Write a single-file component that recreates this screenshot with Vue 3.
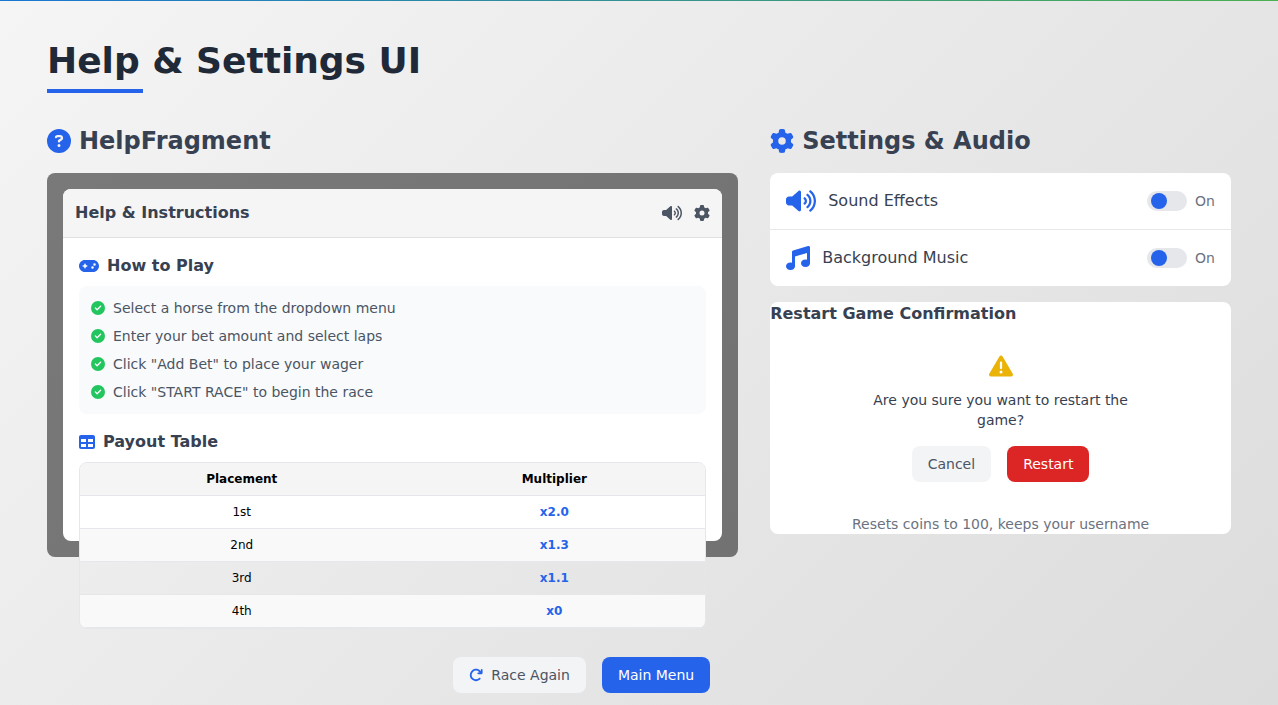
<script setup>
import { h, ref } from 'vue'

const glyphs = {
  question: [512, 'M256 512A256 256 0 1 0 256 0a256 256 0 1 0 0 512zM169.8 165.3c7.9-22.3 29.1-37.3 52.8-37.3h58.3c34.9 0 63.1 28.3 63.1 63.1c0 22.6-12.1 43.5-31.7 54.8L280 264.4c-.2 13-10.9 23.6-24 23.6c-13.3 0-24-10.7-24-24V250.5c0-8.6 4.6-16.5 12.1-20.8l44.3-25.4c4.7-2.7 7.6-7.7 7.6-13.1c0-8.4-6.8-15.1-15.1-15.1H222.6c-3.4 0-6.4 2.1-7.5 5.3l-.4 1.2c-4.4 12.5-18.2 19-30.6 14.6s-19-18.2-14.6-30.6l.4-1.2zM224 352a32 32 0 1 1 64 0 32 32 0 1 1-64 0z'],
  gear: [512, 'M495.9 166.6c3.2 8.7 .5 18.4-6.4 24.6l-43.3 39.4c1.1 8.3 1.7 16.8 1.7 25.4s-.6 17.1-1.7 25.4l43.3 39.4c6.9 6.2 9.6 15.9 6.4 24.6c-4.4 11.9-9.7 23.3-15.8 34.3l-4.7 8.1c-6.6 11-14 21.4-22.1 31.2c-5.9 7.2-15.7 9.6-24.5 6.8l-55.7-17.7c-13.4 10.3-28.2 18.9-44 25.4l-12.5 57.1c-2 9.1-9 16.3-18.2 17.8c-13.8 2.3-28 3.5-42.5 3.5s-28.7-1.2-42.5-3.5c-9.2-1.5-16.2-8.7-18.2-17.8l-12.5-57.1c-15.8-6.5-30.6-15.1-44-25.4L83.1 425.9c-8.8 2.8-18.6 .3-24.5-6.8c-8.1-9.8-15.5-20.2-22.1-31.2l-4.7-8.1c-6.1-11-11.4-22.4-15.8-34.3c-3.2-8.7-.5-18.4 6.4-24.6l43.3-39.4C64.6 273.1 64 264.6 64 256s.6-17.1 1.7-25.4L22.4 191.2c-6.9-6.2-9.6-15.9-6.4-24.6c4.4-11.9 9.7-23.3 15.8-34.3l4.7-8.1c6.6-11 14-21.4 22.1-31.2c5.9-7.2 15.7-9.6 24.5-6.8l55.7 17.7c13.4-10.3 28.2-18.9 44-25.4l12.5-57.1c2-9.1 9-16.3 18.2-17.8C227.3 1.2 241.5 0 256 0s28.7 1.2 42.5 3.5c9.2 1.5 16.2 8.7 18.2 17.8l12.5 57.1c15.8 6.5 30.6 15.1 44 25.4l55.7-17.7c8.8-2.8 18.6-.3 24.5 6.8c8.1 9.8 15.5 20.2 22.1 31.2l4.7 8.1c6.1 11 11.4 22.4 15.8 34.3zM256 336a80 80 0 1 0 0-160 80 80 0 1 0 0 160z'],
  volume: [640, 'M533.6 32.5C598.5 85.3 640 165.8 640 256s-41.5 170.8-106.4 223.5c-10.3 8.4-25.4 6.8-33.8-3.5s-6.8-25.4 3.5-33.8C557.5 398.2 592 331.2 592 256s-34.5-142.2-88.7-186.3c-10.3-8.4-11.8-23.5-3.5-33.8s23.5-11.8 33.8-3.5zM473.1 107c43.2 35.2 70.9 88.9 70.9 149s-27.7 113.8-70.9 149c-10.3 8.4-25.4 6.8-33.8-3.5s-6.8-25.4 3.5-33.8C475.3 341.3 496 301.1 496 256s-20.7-85.3-53.2-111.8c-10.3-8.4-11.8-23.5-3.5-33.8s23.5-11.8 33.8-3.5zm-60.5 74.5C434.1 199.1 448 225.9 448 256s-13.9 56.9-35.4 74.5c-10.3 8.4-25.4 6.8-33.8-3.5s-6.8-25.4 3.5-33.8C393.1 284.4 400 271 400 256s-6.9-28.4-17.7-37.3c-10.3-8.4-11.8-23.5-3.5-33.8s23.5-11.8 33.8-3.5zM301.1 34.8C312.6 40 320 51.4 320 64V448c0 12.6-7.4 24-18.9 29.2s-25 3.1-34.4-5.3L131.8 352H64c-35.3 0-64-28.7-64-64V224c0-35.3 28.7-64 64-64h67.8L266.7 40.1c9.4-8.4 22.9-10.4 34.4-5.3z'],
  music: [512, 'M499.1 6.3c8.1 6 12.9 15.6 12.9 25.7v72V368c0 44.2-43 80-96 80s-96-35.8-96-80s43-80 96-80c11.2 0 22 1.6 32 4.6V147L192 223.8V432c0 44.2-43 80-96 80s-96-35.8-96-80s43-80 96-80c11.2 0 22 1.6 32 4.6V200 128c0-14.1 9.3-26.6 22.8-30.7l320-96c9.7-2.9 20.2-1.1 28.3 5z'],
  gamepad: [640, 'M192 64C86 64 0 150 0 256S86 448 192 448H448c106 0 192-86 192-192s-86-192-192-192H192zM496 168a40 40 0 1 1 0 80 40 40 0 1 1 0-80zM392 304a40 40 0 1 1 80 0 40 40 0 1 1-80 0zM168 200c0-13.3 10.7-24 24-24s24 10.7 24 24v32h32c13.3 0 24 10.7 24 24s-10.7 24-24 24H216v32c0 13.3-10.7 24-24 24s-24-10.7-24-24V280H136c-13.3 0-24-10.7-24-24s10.7-24 24-24h32V200z'],
  check: [512, 'M256 512A256 256 0 1 0 256 0a256 256 0 1 0 0 512zM369 209L241 337c-9.4 9.4-24.6 9.4-33.9 0l-64-64c-9.4-9.4-9.4-24.6 0-33.9s24.6-9.4 33.9 0l47 47L335 175c9.4-9.4 24.6-9.4 33.9 0s9.4 24.6 0 33.9z'],
  table: [512, 'M64 256V160H224v96H64zm0 64H224v96H64V320zm224 96V320H448v96H288zM448 256H288V160H448v96zM64 32C28.7 32 0 60.7 0 96V416c0 35.3 28.7 64 64 64H448c35.3 0 64-28.7 64-64V96c0-35.3-28.7-64-64-64H64z'],
  warning: [512, 'M256 32c14.2 0 27.3 7.5 34.5 19.8l216 368c7.3 12.4 7.3 27.7 .2 40.1S486.3 480 472 480H40c-14.3 0-27.6-7.7-34.7-20.1s-7-27.8 .2-40.1l216-368C228.7 39.5 241.8 32 256 32zm0 128c-13.3 0-24 10.7-24 24V296c0 13.3 10.7 24 24 24s24-10.7 24-24V184c0-13.3-10.7-24-24-24zm32 224a32 32 0 1 0 -64 0 32 32 0 1 0 64 0z'],
  redo: [512, 'M386.3 160H336c-17.7 0-32 14.3-32 32s14.3 32 32 32H464c17.7 0 32-14.3 32-32V64c0-17.7-14.3-32-32-32s-32 14.3-32 32v51.2L414.4 97.6c-87.5-87.5-229.3-87.5-316.8 0s-87.5 229.3 0 316.8s229.3 87.5 316.8 0c12.5-12.5 12.5-32.8 0-45.3s-32.8-12.5-45.3 0c-62.5 62.5-163.8 62.5-226.3 0s-62.5-163.8 0-226.3s163.8-62.5 226.3 0L386.3 160z']
}

const Icon = (props) => {
  const [width, d] = glyphs[props.name]
  return h('svg', { viewBox: `0 0 ${width} 512`, fill: 'currentColor', 'aria-hidden': 'true' }, [h('path', { d })])
}
Icon.props = ['name']

const steps = [
  'Select a horse from the dropdown menu',
  'Enter your bet amount and select laps',
  'Click "Add Bet" to place your wager',
  'Click "START RACE" to begin the race'
]

const payouts = [
  ['1st', 'x2.0'],
  ['2nd', 'x1.3'],
  ['3rd', 'x1.1'],
  ['4th', 'x0']
]

const settings = ref([
  { id: 'sound', label: 'Sound Effects', icon: 'volume', on: true },
  { id: 'music', label: 'Background Music', icon: 'music', on: true }
])
</script>

<template>
  <div class="page">
    <div class="accent"></div>
    <main class="content">
      <h1 class="title">Help &amp; Settings UI</h1>
      <div class="columns">
        <section>
          <h2 class="heading"><Icon name="question" class="icon large blue" />HelpFragment</h2>
          <div class="backdrop">
            <div class="dialog">
              <header class="bar">
                <h3 class="subtitle">Help &amp; Instructions</h3>
                <div class="tools">
                  <button type="button" class="tool" aria-label="Sound"><Icon name="volume" class="icon medium" /></button>
                  <button type="button" class="tool" aria-label="Settings"><Icon name="gear" class="icon medium" /></button>
                </div>
              </header>
              <div class="body">
                <div>
                  <h3 class="subtitle"><Icon name="gamepad" class="icon medium blue" />How to Play</h3>
                  <ul class="steps">
                    <li v-for="step in steps" :key="step"><Icon name="check" class="icon small green" />{{ step }}</li>
                  </ul>
                </div>
                <div>
                  <h3 class="subtitle"><Icon name="table" class="icon medium blue" />Payout Table</h3>
                  <div class="frame">
                    <table class="payouts">
                      <thead>
                        <tr><th>Placement</th><th>Multiplier</th></tr>
                      </thead>
                      <tbody>
                        <tr v-for="[place, rate] in payouts" :key="place">
                          <td>{{ place }}</td>
                          <td class="rate">{{ rate }}</td>
                        </tr>
                      </tbody>
                    </table>
                  </div>
                </div>
              </div>
              <footer class="actions">
                <button type="button" class="button plain"><Icon name="redo" class="icon small blue" />Race Again</button>
                <button type="button" class="button primary">Main Menu</button>
              </footer>
            </div>
          </div>
        </section>

        <section>
          <h2 class="heading"><Icon name="gear" class="icon large blue" />Settings &amp; Audio</h2>
          <div class="card">
            <div v-for="item in settings" :key="item.id" class="setting">
              <label :for="item.id" class="name"><Icon :name="item.icon" class="icon large blue" />{{ item.label }}</label>
              <input :id="item.id" v-model="item.on" type="checkbox" class="switch" />
              <span class="state">{{ item.on ? 'On' : 'Off' }}</span>
            </div>
          </div>
          <div class="card">
            <h3 class="subtitle">Restart Game Confirmation</h3>
            <div class="confirm">
              <div class="alert"><Icon name="warning" class="icon large" /></div>
              <p class="question">Are you sure you want to restart the game?</p>
              <div class="choices">
                <button type="button" class="button plain">Cancel</button>
                <button type="button" class="button danger">Restart</button>
              </div>
            </div>
            <p class="note">Resets coins to 100, keeps your username</p>
          </div>
        </section>
      </div>
    </main>
  </div>
</template>

<style>
body {
  margin: 0;
}
</style>

<style scoped>
.page {
  box-sizing: border-box;
  height: 100vh;
  overflow: hidden;
  background: linear-gradient(135deg, #f5f5f5, #dcdcdc);
  color: #374151;
  font-family: "DejaVu Sans", sans-serif;
  font-size: 14px;
  line-height: 20px;
}
.page * {
  box-sizing: border-box;
}
h1, h2, h3, p, ul {
  margin: 0;
  padding: 0;
}
.accent {
  height: 1px;
  background: linear-gradient(90deg, #1976d2, #4caf50);
}
.content {
  padding: 40px 47px;
}
.title {
  color: #1f2937;
  font-size: 36px;
  line-height: 40px;
}
.title::after {
  content: "";
  display: block;
  width: 96px;
  height: 4px;
  margin-top: 8px;
  background: #2563eb;
}
.columns {
  display: grid;
  grid-template-columns: 3fr 2fr;
  gap: 32px;
  margin-top: 32px;
}
.heading {
  display: flex;
  align-items: center;
  gap: 8px;
  margin-bottom: 16px;
  font-size: 24px;
  line-height: 32px;
}
.subtitle {
  display: flex;
  align-items: center;
  gap: 8px;
  font-size: 16px;
  line-height: 24px;
}
.icon {
  display: block;
  flex: none;
}
.small {
  height: 14px;
}
.medium {
  height: 16px;
}
.large {
  height: 24px;
}
.blue {
  color: #2563eb;
}
.green {
  color: #22c55e;
}
.backdrop {
  height: 384px;
  padding: 16px;
  border-radius: 8px;
  background: rgba(0, 0, 0, 0.5);
}
.dialog {
  height: 100%;
  border-radius: 8px;
  background: #fff;
}
.bar {
  display: flex;
  align-items: center;
  justify-content: space-between;
  padding: 12px;
  border-bottom: 1px solid #e0e0e0;
  border-radius: 8px 8px 0 0;
  background: #f5f5f5;
}
.tools {
  display: flex;
  gap: 12px;
}
.tool {
  padding: 0;
  border: 0;
  background: none;
  color: #4b5563;
  cursor: pointer;
}
.body {
  display: grid;
  gap: 16px;
  padding: 16px;
}
.steps {
  display: grid;
  gap: 8px;
  margin-top: 8px;
  padding: 12px;
  border-radius: 8px;
  background: #f9fafb;
  color: #4b5563;
  list-style: none;
}
.steps li {
  display: flex;
  align-items: center;
  gap: 8px;
}
.frame {
  margin-top: 8px;
  overflow: hidden;
  border: 1px solid #e5e7eb;
  border-radius: 8px;
}
.payouts {
  width: 100%;
  border-spacing: 0;
  color: #000;
  font-size: 12px;
  line-height: 16px;
  text-align: center;
}
.payouts th,
.payouts td {
  padding: 8px;
  border-bottom: 1px solid #e5e7eb;
}
.payouts th {
  background: #f5f5f5;
}
.payouts tbody tr:nth-child(even) {
  background: #f9f9f9;
}
.payouts .rate {
  color: #2563eb;
  font-weight: 700;
}
.actions {
  display: flex;
  justify-content: flex-end;
  gap: 16px;
  padding: 12px;
}
.button {
  display: flex;
  align-items: center;
  gap: 8px;
  padding: 8px 16px;
  border: 0;
  border-radius: 8px;
  font: inherit;
  cursor: pointer;
}
.plain {
  background: #f3f4f6;
  color: #4b5563;
}
.primary {
  background: #2563eb;
  color: #fff;
}
.danger {
  background: #dc2626;
  color: #fff;
}
.card {
  margin-bottom: 16px;
  border-radius: 8px;
  background: #fff;
}
.setting {
  display: flex;
  align-items: center;
  gap: 8px;
  padding: 16px;
}
.setting + .setting {
  border-top: 1px solid #e5e7eb;
}
.name {
  display: flex;
  flex: 1;
  align-items: center;
  gap: 12px;
  font-size: 16px;
  line-height: 24px;
}
.switch {
  appearance: none;
  width: 40px;
  height: 20px;
  margin: 0;
  padding: 2px 4px;
  border-radius: 10px;
  background: #e5e7eb;
  cursor: pointer;
}
.switch::before {
  content: "";
  display: block;
  width: 16px;
  height: 16px;
  border-radius: 50%;
  background: #9ca3af;
}
.switch:checked::before {
  background: #2563eb;
}
.state,
.note {
  color: #6b7280;
}
.confirm {
  max-width: 304px;
  margin: 8px auto 0;
  padding: 16px;
  text-align: center;
}
.alert {
  display: flex;
  justify-content: center;
  padding: 4px;
  color: #eab308;
}
.question {
  margin: 8px 0 16px;
}
.choices {
  display: flex;
  justify-content: center;
  gap: 16px;
}
.note {
  margin-top: 16px;
  text-align: center;
}
</style>
